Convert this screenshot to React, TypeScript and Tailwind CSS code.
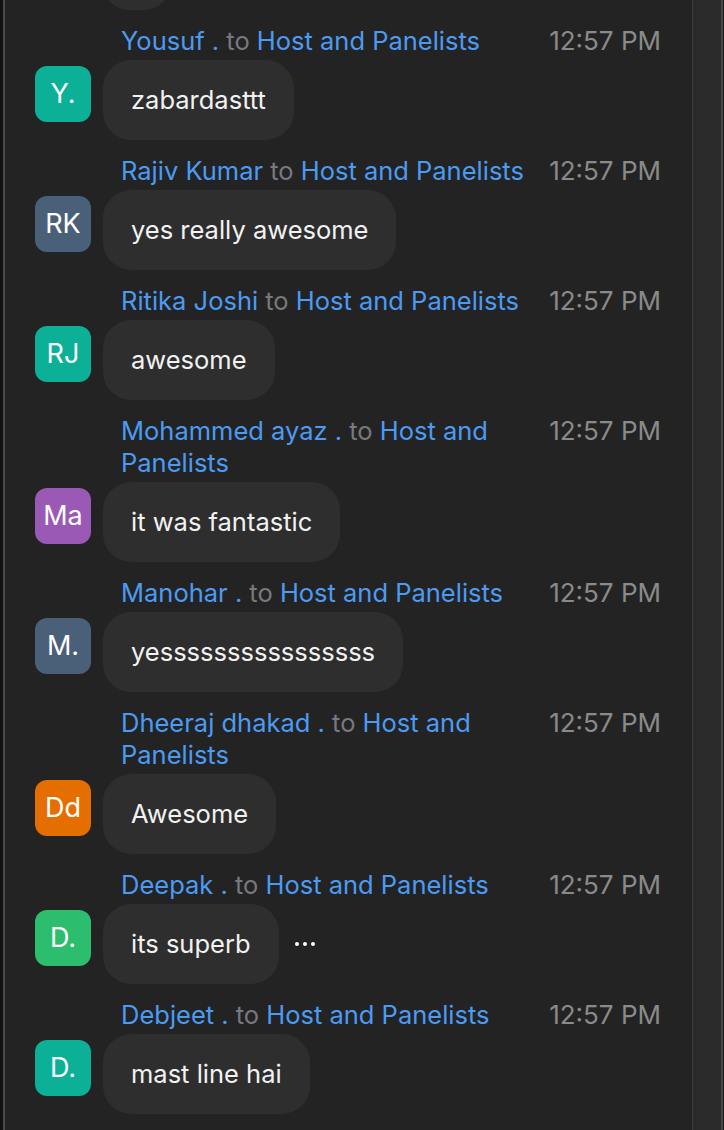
import React from 'react';

type Msg = {
  name: string;
  initials: string;
  avatar: string;
  text: string;
  more?: boolean;
};

const messages: Msg[] = [
  { name: 'Yousuf .', initials: 'Y.', avatar: 'bg-[#0bb096]', text: 'zabardasttt' },
  { name: 'Rajiv Kumar', initials: 'RK', avatar: 'bg-[#4a6079]', text: 'yes really awesome' },
  { name: 'Ritika Joshi', initials: 'RJ', avatar: 'bg-[#0bb096]', text: 'awesome' },
  { name: 'Mohammed ayaz .', initials: 'Ma', avatar: 'bg-[#9b59b6]', text: 'it was fantastic' },
  { name: 'Manohar .', initials: 'M.', avatar: 'bg-[#4a6079]', text: 'yessssssssssssssss' },
  { name: 'Dheeraj dhakad .', initials: 'Dd', avatar: 'bg-[#e46f00]', text: 'Awesome' },
  { name: 'Deepak .', initials: 'D.', avatar: 'bg-[#2dbd6e]', text: 'its superb', more: true },
  { name: 'Debjeet .', initials: 'D.', avatar: 'bg-[#0bb096]', text: 'mast line hai' },
];

function ChatItem({ m }: { m: Msg }) {
  return (
    <div className="pt-[15px]">
      {/* header: sender -> recipients, time */}
      <div className="flex items-start pl-[116px] pr-[31px] text-[25.5px] leading-[32px]">
        <div className="flex flex-1 min-w-0 flex-wrap gap-x-[0.28em] text-[#4c9bf2]">
          <span>{m.name}</span>
          <span className="text-[#78787f]">to</span>
          <span>Host</span>
          <span>and</span>
          <span>Panelists</span>
        </div>
        <div className="ml-5 shrink-0 text-[26px] text-[#8a8a8a]">12:57 PM</div>
      </div>
      <div className="mt-[3px] flex items-start pl-[30px]">
        <div
          className={`mt-[6px] flex h-[56px] w-[56px] shrink-0 items-center justify-center rounded-[12px] text-[27px] text-white ${m.avatar}`}
        >
          {m.initials}
        </div>
        <div className="ml-[12px] flex h-[80px] items-center rounded-[28px] bg-[#2e2e2e] px-[28px] text-[25.5px] text-[#f2f2f2]">
          {m.text}
        </div>
        {m.more && (
          <div className="ml-4 flex h-[80px] items-center gap-1">
            <span className="h-1 w-1 rounded-full bg-white" />
            <span className="h-1 w-1 rounded-full bg-white" />
            <span className="h-1 w-1 rounded-full bg-white" />
          </div>
        )}
      </div>
    </div>
  );
}

export default function App() {
  return (
    <div
      className="flex h-[1130px] w-[724px] overflow-hidden bg-[#232323]"
      style={{ fontFamily: 'Inter, "Noto Sans", sans-serif' }}
    >
      {/* left edge */}
      <div className="w-[3px] shrink-0 bg-[#121212]" />
      <div className="w-[2px] shrink-0 bg-[#4a4a4a]" />

      {/* chat list */}
      <div className="w-[687px] shrink-0">
        {/* tail of the previous message */}
        <div className="-mt-[70px] pl-[98px]">
          <div className="h-[80px] w-[67px] rounded-[26px] bg-[#2e2e2e]" />
        </div>
        {messages.map((m, i) => (
          <ChatItem key={i} m={m} />
        ))}
      </div>

      {/* scrollbar track */}
      <div className="w-px shrink-0 bg-[#3c3c3c]" />
      <div className="w-[28px] shrink-0 bg-[#2a2a2a]" />
      <div className="w-[2px] shrink-0 bg-[#454545]" />
      <div className="flex-1 bg-[#1c1c1c]" />
    </div>
  );
}
